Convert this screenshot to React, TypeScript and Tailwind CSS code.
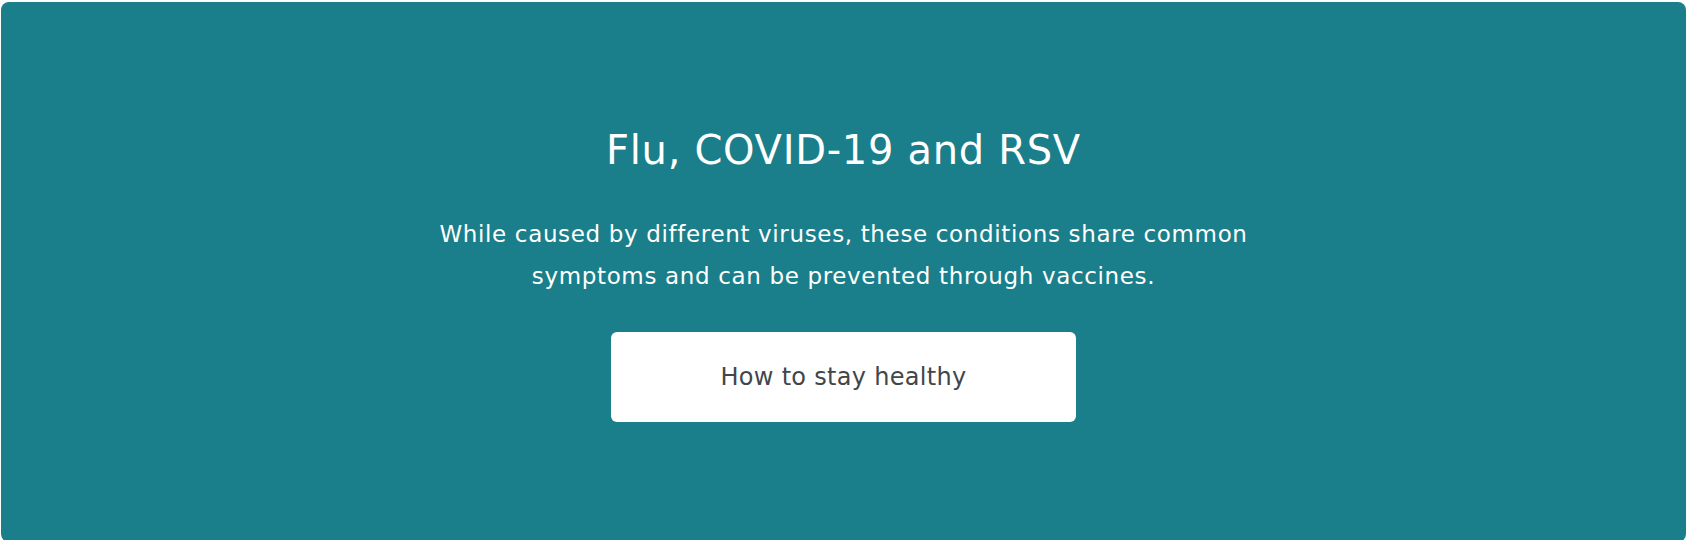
export default function App() {
  return (
    <div className="w-full h-[540px] overflow-hidden bg-white">
      <div className="mx-[1px] mt-[2px] h-[540px] rounded-lg bg-[#1a7f8a] flex flex-col items-center pt-[124px] text-white" style={{ fontFamily: '"DejaVu Sans", sans-serif' }}>
        <h1 className="text-[40px] leading-[48px] font-normal tracking-[0.7px]">Flu, COVID-19 and RSV</h1>
        <p className="mt-[39px] text-[23px] leading-[42px] font-normal text-center tracking-[0.65px]">
          While caused by different viruses, these conditions share common
          <br />
          symptoms and can be prevented through vaccines.
        </p>
        <button className="mt-[35px] w-[465px] h-[90px] rounded-md bg-white text-[#41464b] text-[24px] font-normal tracking-[0.3px]">
          How to stay healthy
        </button>
      </div>
    </div>
  );
}
